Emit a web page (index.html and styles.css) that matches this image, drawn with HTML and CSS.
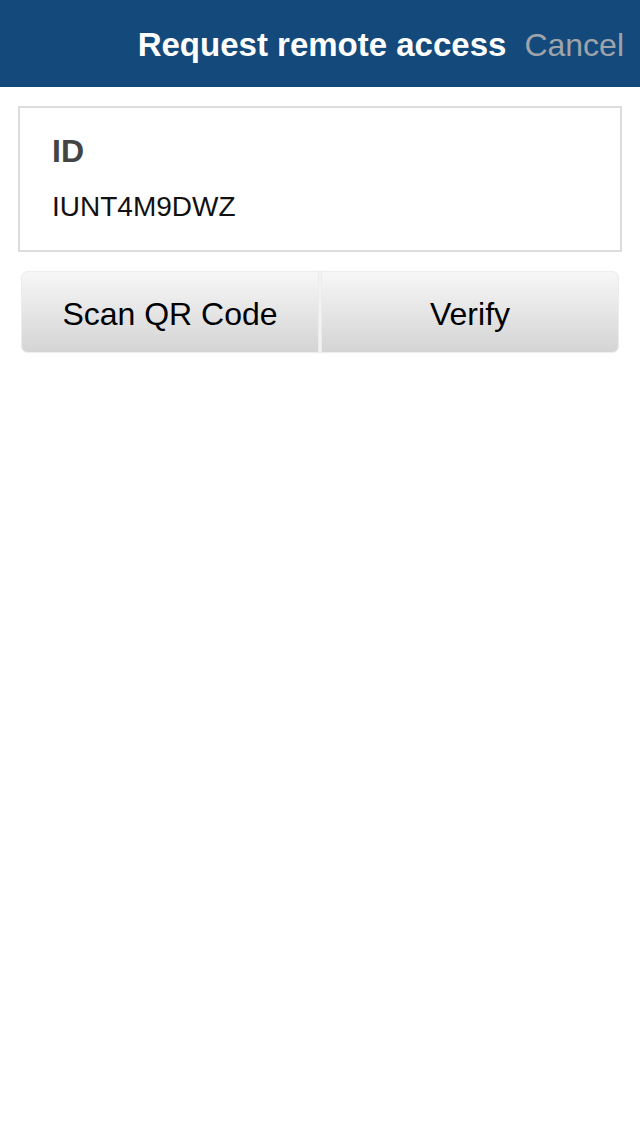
FILE: index.html
```html
<!DOCTYPE html>
<html>
<head>
<title>Request remote access</title>
<meta name="viewport" content="width=device-width, initial-scale=1.0"/>
<meta http-equiv="Content-Type" content="text/html; charset=UTF-8"/>
<link rel="stylesheet" href="styles.css">
</head>
<body>
	<div class="navBar">
		<div class="navTitle">Request remote access</div>
		<div class="navCancel">Cancel</div>
	</div>

	<div class="idCard">
		<div class="idLabel">ID</div>
		<div class="idValue">IUNT4M9DWZ</div>
	</div>

	<div class="btnGroup">
		<div class="btn btnLeft">Scan QR Code</div>
		<div class="btn btnRight">Verify</div>
	</div>
</body>
</html>
```

FILE: styles.css
```css
body
{
	margin: 0;
	padding: 0;
	width: 640px;
	min-height: 1136px;
	background-color: #fff;
	font-family: "Liberation Sans", Arial, Helvetica, sans-serif;
	color: #000;
}

.navBar
{
	height: 87px;
	box-sizing: border-box;
	padding: 2px 16px 0 0;
	background-color: #144a7b;
	display: flex;
	align-items: center;
	justify-content: flex-end;
	gap: 18px;
}

.navTitle
{
	color: #fff;
	font-size: 33px;
	font-weight: bold;
	line-height: 36px;
}

.navCancel
{
	color: #9ea4aa;
	font-size: 32px;
	line-height: 36px;
}

.idCard
{
	margin: 19px 18px 0 18px;
	border: 2px solid #dcdcdc;
	padding: 25px 32px 27px 32px;
}

.idLabel
{
	font-size: 32px;
	font-weight: bold;
	line-height: 36px;
	color: #444;
}

.idValue
{
	margin-top: 22px;
	font-size: 28px;
	line-height: 32px;
	color: #111;
}

.btnGroup
{
	margin: 19px 21px 0 21px;
	display: flex;
	gap: 2px;
	background-color: #f2f2f2;
	border-radius: 7px;
}

.btn
{
	flex: 1;
	height: 82px;
	box-sizing: border-box;
	padding-top: 5px;
	border: 1px solid #ececec;
	display: flex;
	align-items: center;
	justify-content: center;
	font-size: 32px;
	color: #000;
	background: linear-gradient(#f7f7f7, #d4d4d4);
}

.btnLeft
{
	border-top-left-radius: 7px;
	border-bottom-left-radius: 7px;
}

.btnRight
{
	border-top-right-radius: 7px;
	border-bottom-right-radius: 7px;
}
```
